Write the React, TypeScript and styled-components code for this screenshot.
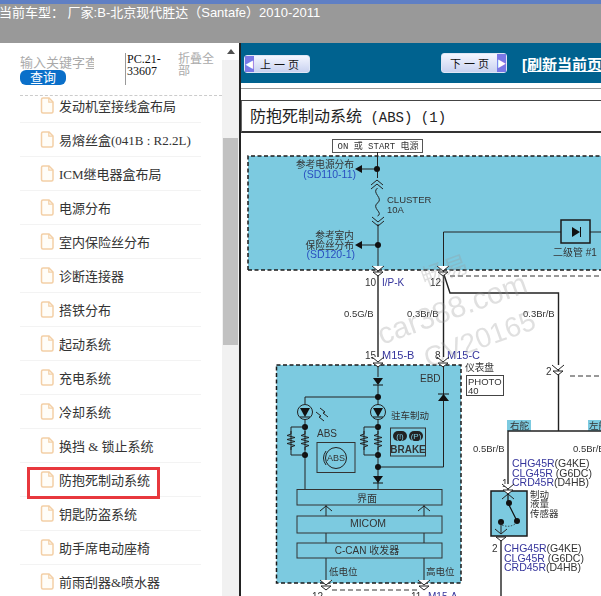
import {ReactElement} from "react";
import styled, {createGlobalStyle} from "styled-components";

const GlobalStyle = createGlobalStyle`
  html, body {
    margin: 0;
    padding: 0;
    background: #fff;
    overflow: hidden;
  }
  #root {
    width: 601px;
    height: 596px;
    overflow: hidden;
    font-family: "Liberation Sans", "Noto Sans CJK SC", sans-serif;
  }
`

const MENU_ITEMS = [
  "发动机室接线盒布局",
  "易熔丝盒(041B : R2.2L)",
  "ICM继电器盒布局",
  "电源分布",
  "室内保险丝分布",
  "诊断连接器",
  "搭铁分布",
  "起动系统",
  "充电系统",
  "冷却系统",
  "换挡 & 锁止系统",
  "防抱死制动系统",
  "钥匙防盗系统",
  "助手席电动座椅",
  "前雨刮器&喷水器",
]

const FileIcon = (): ReactElement => (
  <svg width="14" height="17" viewBox="0 0 14 17">
    <path d="M1.5 2.5 Q1.5 1 3 1 H9 L13 5 V14.5 Q13 16 11.5 16 H3 Q1.5 16 1.5 14.5 Z" fill="#fffdf8" stroke="#f3cfa6" strokeWidth="1.5"/>
    <path d="M8.8 1 V5.2 H13" fill="none" stroke="#f3cfa6" strokeWidth="1.2"/>
  </svg>
)

const Connector = ({x, y}: {x: number, y: number}): ReactElement => (
  <path d={`M${x - 6} ${y - 5} L${x} ${y} L${x + 6} ${y - 5} M${x - 5} ${y + 1} L${x} ${y + 5} L${x + 5} ${y + 1} Z`} fill="#fff" stroke="#222" strokeWidth="1"/>
)

const UpChevron = ({x, y}: {x: number, y: number}): ReactElement => (
  <path d={`M${x - 6} ${y + 5} L${x} ${y} L${x + 6} ${y + 5}`} fill="none" stroke="#222" strokeWidth="1"/>
)

const DownChevron = ({x, y}: {x: number, y: number}): ReactElement => (
  <path d={`M${x - 6} ${y - 5} L${x} ${y} L${x + 6} ${y - 5}`} fill="none" stroke="#222" strokeWidth="1"/>
)

const Dot = ({x, y}: {x: number, y: number}): ReactElement => <circle cx={x} cy={y} r="3" fill="#111"/>

const Resistor = ({x, y}: {x: number, y: number}): ReactElement => (
  <path d={`M${x} ${y} v3 l-4 1.5 l8 2 l-8 2 l8 2 l-8 2 l8 2 l-4 1.5 v3`} fill="none" stroke="#222" strokeWidth="1"/>
)

const Lamp = ({x, y}: {x: number, y: number}): ReactElement => (
  <g>
    <circle cx={x} cy={y} r="7.5" fill="none" stroke="#222" strokeWidth="1"/>
    <path d={`M${x - 5} ${y - 4} H${x + 5} L${x} ${y + 5} Z`} fill="#111"/>
    <path d={`M${x - 5} ${y + 5} H${x + 5}`} stroke="#111" strokeWidth="1"/>
  </g>
)

const WiringDiagram = (): ReactElement => (
  <Diagram viewBox="241 133 360 463">
    <rect x="248" y="156" width="360" height="114" fill="#7ccae0"/>
    <path d="M248 270 V156 H601 M248 270 H601" fill="none" stroke="#1a1a1a" strokeWidth="1.5" strokeDasharray="4 2.5"/>
    <rect x="276.5" y="365" width="184.5" height="218" fill="#7ccae0" stroke="#1a1a1a" strokeWidth="1.5" strokeDasharray="4 2.5"/>
    <rect x="491" y="491" width="36" height="45" fill="#7ccae0" stroke="#1a1a1a" strokeWidth="1.5"/>
    <rect x="507" y="420" width="24" height="11" fill="#7ccae0"/>
    <rect x="588" y="420" width="13" height="11" fill="#7ccae0"/>

    <rect x="332.5" y="139.5" width="90" height="13" fill="#fff" stroke="#555" strokeWidth="1"/>
    <Label x={378} y={149} $size={9} $anchor="middle" $mono>ON 或 START 电源</Label>

    <path d="M377.5 152 V178 M377.5 169 H362 M378 224 V270 M378 245 H362" fill="none" stroke="#222" strokeWidth="1"/>
    <path d="M355 169 L362 165 V173 Z M355 245 L362 241 V249 Z" fill="#111"/>
    <Dot x={377} y={169}/>
    <Dot x={378} y={245}/>
    <UpChevron x={377} y={180}/>
    <UpChevron x={377} y={184}/>
    <path d="M377.5 188 C371 193 384 198 377.5 203 C371 208 384 213 377.5 216" fill="none" stroke="#222" strokeWidth="1"/>
    <DownChevron x={378} y={222}/>
    <DownChevron x={378} y={226}/>
    <Label x={354} y={168} $size={9.7} $anchor="end">参考电源分布</Label>
    <Label x={356} y={178} $size={10.5} $anchor="end" $blue>(SD110-11)</Label>
    <Label x={387} y={203} $size={9.5}>CLUSTER</Label>
    <Label x={387} y={213} $size={9.5}>10A</Label>
    <Label x={354} y={239} $size={9.7} $anchor="end">参考室内</Label>
    <Label x={354} y={249} $size={9.7} $anchor="end">保险丝分布</Label>
    <Label x={355} y={258} $size={10.5} $anchor="end" $blue>(SD120-1)</Label>

    <path d="M443.5 270 V232 H561 M590 232 H601" fill="none" stroke="#222" strokeWidth="1"/>
    <rect x="561" y="220" width="29" height="23" fill="none" stroke="#1a1a1a" strokeWidth="1.5"/>
    <path d="M572 227 L580 232 L572 237 Z" fill="#111"/>
    <path d="M580.5 227 V237" stroke="#111" strokeWidth="1"/>
    <Label x={553} y={256} $size={10}>二级管 #1</Label>

    <path d="M450 276 H601 M570 376 H601" fill="none" stroke="#333" strokeWidth="1" strokeDasharray="5 3"/>
    <path d="M378 270 V360 M443.5 270 V360 M443.5 273 L450 293 H558.5 V431 M508 490 V431 H601 M501 537 V596" fill="none" stroke="#222" strokeWidth="1.4"/>
    <Connector x={378} y={271}/>
    <Connector x={443} y={271}/>
    <Label x={365} y={286} $size={10}>10</Label>
    <Label x={382} y={286} $size={10} $navy>I/P-K</Label>
    <Label x={430} y={286} $size={10}>12</Label>
    <Label x={344} y={317} $size={9.5}>0.5G/B</Label>
    <Label x={407} y={317} $size={9.5}>0.3Br/B</Label>
    <Label x={523} y={317} $size={9.5}>0.3Br/B</Label>
    <Label x={365} y={359} $size={10}>15</Label>
    <Label x={382} y={359} $size={11} $navy>M15-B</Label>
    <Label x={435} y={359} $size={10}>8</Label>
    <Label x={447} y={359} $size={11} $navy>M15-C</Label>
    <Connector x={378} y={362}/>
    <Connector x={443} y={362}/>

    <Label x={465} y={371} $size={9.7}>仪表盘</Label>
    <rect x="466.5" y="375.5" width="37" height="20" fill="#fff" stroke="#444" strokeWidth="1"/>
    <Label x={468} y={385} $size={9.5}>PHOTO</Label>
    <Label x={468} y={394} $size={9.5}>40</Label>
    <Label x={420} y={382} $size={10}>EBD</Label>

    <path d="M378 366 V377 M378 385 V405 M305 404 V397 H378 M305 419 V489 M378 419 V489 M443.5 366 V467 H378" fill="none" stroke="#222" strokeWidth="1"/>
    <path d="M373 378 H383 L378 385 Z M438 401 H449 L443.5 394 Z M373 476 H383 L378 483 Z" fill="#111"/>
    <path d="M373 385 H383 M438 394 H449 M373 483 H383" stroke="#111" strokeWidth="1"/>
    <Dot x={378} y={397}/>
    <Lamp x={305} y={412}/>
    <Lamp x={378} y={412}/>
    <path d="M316 412 l5 4 l-2 1 l5 4 M320 408 l5 4 l-2 1 l5 4" fill="none" stroke="#222" strokeWidth="1"/>
    <Dot x={305} y={427}/>
    <Dot x={305} y={455}/>
    <Dot x={378} y={427}/>
    <Dot x={378} y={455}/>
    <Dot x={378} y={467}/>
    <path d="M305 427 H291 V455 H305 M378 427 H364 V455 H378" fill="none" stroke="#222" strokeWidth="1"/>
    <Resistor x={291} y={431}/>
    <Resistor x={305} y={431}/>
    <Resistor x={364} y={431}/>
    <Resistor x={378} y={431}/>
    <Label x={317} y={437} $size={10}>ABS</Label>
    <Label x={391} y={419} $size={9.5}>驻车制动</Label>

    <rect x="317" y="442.5" width="38" height="30" fill="none" stroke="#333" strokeWidth="1"/>
    <circle cx="336" cy="458" r="10.5" fill="none" stroke="#222" strokeWidth="1"/>
    <Label x={336} y={461} $size={9} $anchor="middle">ABS</Label>
    <path d="M326 451 Q321 458 326 465" fill="none" stroke="#222" strokeWidth="1"/>

    <rect x="390.5" y="428" width="35" height="28" fill="none" stroke="#333" strokeWidth="1"/>
    <rect x="393" y="431" width="14" height="10" rx="5" fill="#222"/>
    <rect x="409" y="431" width="14" height="10" rx="5" fill="#222"/>
    <Label x={400} y={439} $size={8} $anchor="middle" $light>(!)</Label>
    <Label x={416} y={439} $size={8} $anchor="middle" $light>(P)</Label>
    <Label x={408} y={453} $size={10} $anchor="middle" $bold>BRAKE</Label>

    <path d="M326 505 V516 M424 505 V516 M326 533 V543 M424 533 V543 M326 558 V583 M424 558 V583" fill="none" stroke="#222" strokeWidth="1"/>
    <UpChevron x={326} y={506}/>
    <UpChevron x={424} y={506}/>
    <rect x="297" y="489.5" width="145" height="15.5" fill="#7ccae0" stroke="#333" strokeWidth="1"/>
    <rect x="297" y="516" width="145" height="17" fill="#7ccae0" stroke="#333" strokeWidth="1"/>
    <rect x="297" y="543" width="145" height="15" fill="#7ccae0" stroke="#333" strokeWidth="1"/>
    <Label x={367} y={502} $size={10} $anchor="middle">界面</Label>
    <Label x={368} y={527} $size={10.5} $anchor="middle">MICOM</Label>
    <Label x={367} y={554} $size={10} $anchor="middle">C-CAN 收发器</Label>
    <Label x={329} y={575} $size={9.5}>低电位</Label>
    <Label x={426} y={575} $size={9.5}>高电位</Label>
    <Connector x={326} y={585}/>
    <Connector x={424} y={585}/>
    <path d="M332 590 H418" fill="none" stroke="#333" strokeWidth="1" strokeDasharray="5 3"/>
    <Label x={312} y={600} $size={10}>12</Label>
    <Label x={411} y={600} $size={10}>11</Label>
    <Label x={428} y={600} $size={10} $navy>M15-A</Label>

    <Connector x={558} y={370}/>
    <Label x={546} y={375} $size={10}>2</Label>
    <Label x={510} y={429} $size={9.5}>右舵</Label>
    <Label x={589} y={429} $size={9.5}>左舵</Label>
    <Label x={473} y={452} $size={9.5}>0.5Br/B</Label>
    <Label x={573} y={452} $size={9.5}>0.5Br/B</Label>

    <Label x={512} y={467} $size={10.5} $navy>CHG45R<Tspan>(G4KE)</Tspan></Label>
    <Label x={512} y={477} $size={10.5} $navy>CLG45R<Tspan> (G6DC)</Tspan></Label>
    <Label x={512} y={486} $size={10.5} $navy>CRD45R<Tspan>(D4HB)</Tspan></Label>
    <Label x={502} y={487} $size={10}>1</Label>
    <Connector x={508} y={489}/>
    <Label x={530} y={498} $size={9.5}>制动</Label>
    <Label x={530} y={507} $size={9.5}>液量</Label>
    <Label x={530} y={517} $size={9.5}>传感器</Label>
    <UpChevron x={508} y={494}/>
    <path d="M508 494 V503 L517 521" fill="none" stroke="#111" strokeWidth="1.2"/>
    <Dot x={509} y={503}/>
    <Dot x={517} y={521}/>
    <Dot x={501} y={522}/>
    <path d="M502 525 Q509 528 515 524" fill="none" stroke="#222" strokeWidth="0.8" strokeDasharray="1.5 1.5"/>
    <path d="M501 522 V533" stroke="#222" strokeWidth="1"/>
    <DownChevron x={501} y={534}/>
    <path d="M496 537 H506 L501 541 Z" fill="#fff" stroke="#222" strokeWidth="1"/>
    <Label x={492} y={552} $size={10}>2</Label>
    <Label x={504} y={552} $size={10.5} $navy>CHG45R<Tspan>(G4KE)</Tspan></Label>
    <Label x={504} y={562} $size={10.5} $navy>CLG45R<Tspan> (G6DC)</Tspan></Label>
    <Label x={504} y={571} $size={10.5} $navy>CRD45R<Tspan>(D4HB)</Tspan></Label>

    <Watermark x={382} y={345} $size={30} transform="rotate(-20 382 345)">car388.com</Watermark>
    <Watermark x={428} y={368} $size={28} transform="rotate(-20 428 368)">CV20165</Watermark>
    <Watermark x={425} y={287} $size={24} transform="rotate(-20 425 287)">畅易</Watermark>
  </Diagram>
)

export default function App(): ReactElement {
  return (
    <>
      <GlobalStyle/>
      <Page>
        <Header>
          <HeaderTitle>当前车型： 厂家:B-北京现代胜达（Santafe）2010-2011</HeaderTitle>
        </Header>
        <Body>
          <Sidebar>
            <SidebarContent>
              <SearchRow>
                <SearchColumn>
                  <SearchInput>输入关键字查询</SearchInput>
                  <SearchButton>查询</SearchButton>
                </SearchColumn>
                <VersionText>PC.21-33607</VersionText>
                <CollapseLink>折叠全部</CollapseLink>
              </SearchRow>
              <Menu>
                {MENU_ITEMS.map((item) => (
                  <MenuItem key={item} $active={item === "防抱死制动系统"}>
                    <FileIcon/>
                    <span>{item}</span>
                  </MenuItem>
                ))}
              </Menu>
            </SidebarContent>
            <ScrollBar>
              <ScrollArrow/>
              <ScrollThumb/>
            </ScrollBar>
          </Sidebar>
          <Viewer>
            <NavBar>
              <PrevButton>
                <ButtonArrow $dir="left"/>
                上一页
              </PrevButton>
              <NextButton>
                下一页
                <ButtonArrow $dir="right"/>
              </NextButton>
              <RefreshLink>[刷新当前页]</RefreshLink>
            </NavBar>
            <PageGap/>
            <DiagramTitle>防抱死制动系统<TitleSuffix> (ABS) (1)</TitleSuffix></DiagramTitle>
            <WiringDiagram/>
          </Viewer>
        </Body>
      </Page>
    </>
  )
}

const Page = styled.div`
  width: 601px;
  height: 596px;
  display: flex;
  flex-direction: column;
  overflow: hidden;
`

const Header = styled.div`
  height: 39px;
  flex-shrink: 0;
  background: #999999;
  border-top: 4px solid #5f7fc4;
  overflow: hidden;
`

const HeaderTitle = styled.div`
  margin-left: -1px;
  font-size: 13px;
  line-height: 18px;
  color: #fff;
  white-space: nowrap;
`

const Body = styled.div`
  flex: 1;
  display: flex;
  min-height: 0;
`

const Sidebar = styled.div`
  width: 239px;
  flex-shrink: 0;
  display: flex;
  background: #fff;
`

const SidebarContent = styled.div`
  width: 222px;
  flex-shrink: 0;
  padding-left: 20px;
  box-sizing: border-box;
  overflow: hidden;
`

const SearchRow = styled.div`
  height: 53px;
  padding-top: 10px;
  box-sizing: border-box;
  display: flex;
  border-bottom: 1px dashed #cccccc;
`

const SearchColumn = styled.div`
  width: 105px;
  flex-shrink: 0;
`

const SearchInput = styled.div`
  width: 74px;
  height: 17px;
  font-size: 13px;
  line-height: 20px;
  color: #aaaaaa;
  white-space: nowrap;
  overflow: hidden;
`

const SearchButton = styled.div`
  width: 46px;
  height: 15px;
  border-radius: 6px;
  background: #0a6fc9;
  color: #fff;
  font-size: 13px;
  line-height: 15px;
  text-align: center;
`

const VersionText = styled.div`
  width: 53px;
  height: 32px;
  flex-shrink: 0;
  padding-left: 1px;
  border-left: 1px solid #999;
  box-sizing: border-box;
  font-family: "Liberation Serif", serif;
  font-size: 12px;
  line-height: 12px;
  color: #111;
`

const CollapseLink = styled.div`
  width: 38px;
  font-size: 12px;
  line-height: 12px;
  color: #aaaaaa;
`

const Menu = styled.ul`
  list-style: none;
  margin: -7px 0 0;
  padding: 0;
  width: 181px;
`

const MenuItem = styled.li<{$active: boolean}>`
  height: 34px;
  box-sizing: border-box;
  display: flex;
  align-items: center;
  gap: 5px;
  padding-left: 20px;
  border-bottom: 1px solid #f3f3f3;
  font-family: "Liberation Serif", "Noto Sans CJK SC", serif;
  font-size: 13px;
  color: #333;
  white-space: nowrap;
  position: relative;

  &::after {
    content: "";
    display: ${(props) => (props.$active ? "block" : "none")};
    position: absolute;
    left: 7px;
    top: 4px;
    width: 133px;
    height: 32px;
    box-sizing: border-box;
    border: 3px solid #e8383d;
  }
`

const ScrollBar = styled.div`
  width: 17px;
  flex-shrink: 0;
  background: #f1f1f1;
  display: flex;
  flex-direction: column;
  align-items: center;
`

const ScrollArrow = styled.div`
  width: 100%;
  height: 17px;
  background: #fff;
  box-sizing: border-box;
  padding-top: 0;
  margin-bottom: 78px;

  &::before {
    content: "";
    display: block;
    width: 0;
    height: 0;
    margin: 6px auto 0;
    border-left: 4px solid transparent;
    border-right: 4px solid transparent;
    border-bottom: 5px solid #505050;
  }
`

const ScrollThumb = styled.div`
  width: 15px;
  height: 207px;
  background: #c1c1c1;
`

const Viewer = styled.div`
  flex: 1;
  min-width: 0;
  display: flex;
  flex-direction: column;
  border-left: 2px solid #222;
  background: #fff;
`

const NavBar = styled.div`
  height: 40px;
  flex-shrink: 0;
  background: #00628f;
  display: flex;
  align-items: flex-start;
  padding-left: 3px;
  box-sizing: border-box;
  overflow: hidden;
`

const NavButton = styled.div`
  width: 66px;
  height: 18px;
  flex-shrink: 0;
  box-sizing: border-box;
  display: flex;
  align-items: center;
  justify-content: space-between;
  border: 1px solid #dfe6f5;
  border-radius: 3px;
  background: linear-gradient(#f4f6ff, #c9d2f0);
  font-size: 11px;
  letter-spacing: 3px;
  color: #111;
  white-space: nowrap;
`

const PrevButton = styled(NavButton)`
  margin-top: 12px;
  padding-right: 7px;
`

const NextButton = styled(NavButton)`
  margin-top: 10px;
  height: 20px;
  margin-left: 131px;
  padding-left: 8px;
`

const ButtonArrow = styled.span<{$dir: "left" | "right"}>`
  width: 9px;
  height: 100%;
  background: #7a78e6;
  display: flex;
  align-items: center;
  justify-content: center;
  color: #fff;
  font-size: 9px;
  letter-spacing: 0;

  &::before {
    content: "${(props) => (props.$dir === "left" ? "◀" : "▶")}";
  }
`

const RefreshLink = styled.div`
  margin: 13px 0 0 15px;
  font-size: 15px;
  line-height: 18px;
  font-weight: bold;
  color: #fff;
  text-decoration: underline;
  white-space: nowrap;
`

const PageGap = styled.div`
  height: 13px;
  flex-shrink: 0;
  box-sizing: border-box;
  margin-top: 5px;
  border-top: 1px solid #999;
  border-bottom: 1px solid #444;
`

const DiagramTitle = styled.div`
  height: 32px;
  flex-shrink: 0;
  box-sizing: border-box;
  padding: 6px 0 0 8px;
  border-left: 1px solid #666;
  border-bottom: 2px solid #333;
  font-size: 16px;
  line-height: 20px;
  color: #222;
  white-space: nowrap;
`

const TitleSuffix = styled.span`
  font-family: "Liberation Mono", "Noto Sans CJK SC", monospace;
  font-size: 14px;
`

const Diagram = styled.svg`
  display: block;
  width: 360px;
  height: 463px;
  flex-shrink: 0;
  filter: blur(0.3px);
`

const Label = styled.text<{
  $size: number,
  $anchor?: string,
  $blue?: boolean,
  $navy?: boolean,
  $mono?: boolean,
  $bold?: boolean,
  $light?: boolean,
}>`
  font-family: ${(props) => (props.$mono ? '"Liberation Mono", "Noto Sans CJK SC", monospace' : '"Liberation Sans", "Noto Sans CJK SC", sans-serif')};
  font-size: ${(props) => props.$size}px;
  font-weight: ${(props) => (props.$bold ? "bold" : "normal")};
  text-anchor: ${(props) => props.$anchor ?? "start"};
  fill: ${(props) => (props.$blue ? "#2a4fc0" : props.$navy ? "#35349c" : props.$light ? "#7ccae0" : "#333")};
`

const Tspan = styled.tspan`
  fill: #333;
`

const Watermark = styled.text<{$size: number}>`
  font-family: "Liberation Sans", "Noto Sans CJK SC", sans-serif;
  font-size: ${(props) => props.$size}px;
  fill: #9a9a9a;
  opacity: 0.3;
`
